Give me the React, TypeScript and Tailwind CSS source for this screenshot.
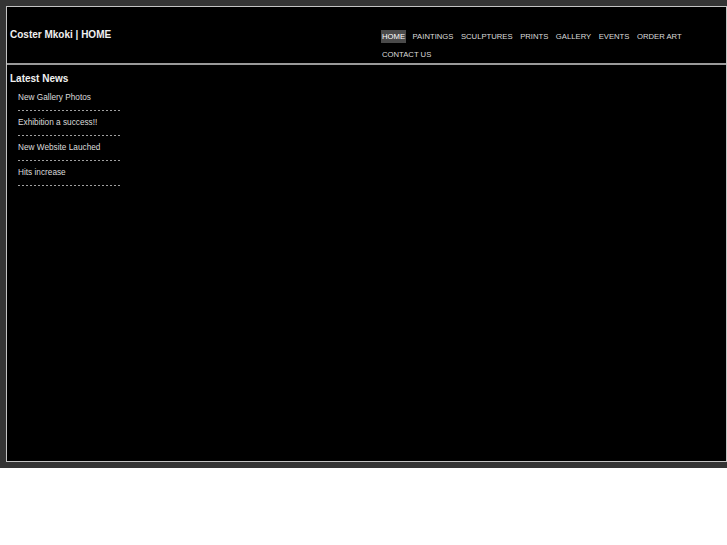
const navLinks = [
  "HOME",
  "PAINTINGS",
  "SCULPTURES",
  "PRINTS",
  "GALLERY",
  "EVENTS",
  "ORDER ART",
  "CONTACT US",
];

const news = [
  "New Gallery Photos",
  "Exhibition a success!!",
  "New Website Lauched",
  "Hits increase",
];

export default function App() {
  return (
    <div className="bg-white font-['Liberation_Sans',Arial,sans-serif]">
      <div className="bg-[#343434] py-[6px] pl-[6px]">
        <div className="flex h-[456px] w-[721px] flex-col border border-[#c4c4c4] bg-black text-[#e6e6e6]">
          <header className="flex h-[58px] shrink-0 border-b-2 border-[#9a9a9a]">
            <div className="flex w-[374px] items-center pl-[3px]">
              <h1 className="text-[10px] font-bold leading-[12px] text-[#f0f0f0]">
                Coster Mkoki | HOME
              </h1>
            </div>
            <nav className="flex flex-1 flex-wrap content-start gap-x-[5.5px] gap-y-[5px] pt-[23px] pr-[6px]">
              {navLinks.map((link) => (
                <a
                  key={link}
                  href="#"
                  className={
                    link === "HOME"
                      ? "bg-[#4a4a4a] px-[1px] text-[7.7px] leading-[13px] text-white"
                      : "px-[1px] text-[7.7px] leading-[13px] text-[#dcdcdc]"
                  }
                >
                  {link}
                </a>
              ))}
            </nav>
          </header>

          <section className="pl-[3px] pt-[8px]">
            <h2 className="text-[10px] font-bold leading-[12px] text-[#f0f0f0]">Latest News</h2>
            <ul className="mt-[1px] w-[110px] pl-[8px]">
              {news.map((item) => (
                <li key={item} className="pt-[6px] text-[8.25px] leading-[12px] text-[#dcdcdc]">
                  <span className="block pb-[6px]">{item}</span>
                  <div className="h-px bg-[repeating-linear-gradient(to_right,#a0a0a0_0_2px,transparent_2px_4px)]" />
                </li>
              ))}
            </ul>
          </section>
        </div>
      </div>
    </div>
  );
}
